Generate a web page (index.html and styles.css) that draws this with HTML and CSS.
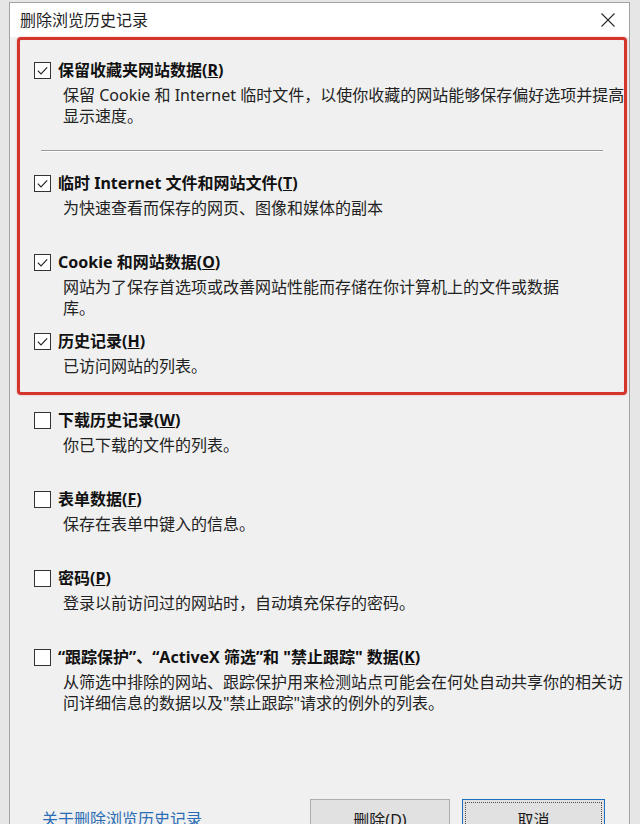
FILE: index.html
```html
<!DOCTYPE html>
<html lang="zh-CN">
<head>
  <meta charset="UTF-8">
  <meta name="viewport" content="width=device-width, initial-scale=1.0">
  <title>删除浏览历史记录</title>
  <link rel="stylesheet" href="styles.css">
</head>
<body>
  <div class="window">
    <div class="titlebar">
      <span class="title">删除浏览历史记录</span>
      <svg class="close" width="14" height="14" viewBox="0 0 14 14">
        <path d="M0.5 0.5 L13.5 13.5 M13.5 0.5 L0.5 13.5" stroke="#2b2b2b" stroke-width="1.1" fill="none"/>
      </svg>
    </div>

    <div class="content">
      <!-- 红框标出的选项 -->
      <div class="highlight">
        <div class="option first">
          <div class="option-head">
            <span class="box"><svg viewBox="0 0 16 16"><path d="M3 8.2 L6.4 11.6 L13 4.6" /></svg></span>
            <span class="label">保留收藏夹网站数据(<u>R</u>)</span>
          </div>
          <div class="option-desc">保留 Cookie 和 Internet 临时文件，以使你收藏的网站能够保存偏好选项并提高<br>显示速度。</div>
        </div>

        <div class="divider"></div>

        <div class="option">
          <div class="option-head">
            <span class="box"><svg viewBox="0 0 16 16"><path d="M3 8.2 L6.4 11.6 L13 4.6" /></svg></span>
            <span class="label">临时 Internet 文件和网站文件(<u>T</u>)</span>
          </div>
          <div class="option-desc">为快速查看而保存的网页、图像和媒体的副本</div>
        </div>

        <div class="option">
          <div class="option-head">
            <span class="box"><svg viewBox="0 0 16 16"><path d="M3 8.2 L6.4 11.6 L13 4.6" /></svg></span>
            <span class="label">Cookie 和网站数据(<u>O</u>)</span>
          </div>
          <div class="option-desc">网站为了保存首选项或改善网站性能而存储在你计算机上的文件或数据<br>库。</div>
        </div>

        <div class="option last">
          <div class="option-head">
            <span class="box"><svg viewBox="0 0 16 16"><path d="M3 8.2 L6.4 11.6 L13 4.6" /></svg></span>
            <span class="label">历史记录(<u>H</u>)</span>
          </div>
          <div class="option-desc">已访问网站的列表。</div>
        </div>
      </div>

      <!-- 其他选项 -->
      <div class="others">
        <div class="option">
          <div class="option-head">
            <span class="box"></span>
            <span class="label">下载历史记录(<u>W</u>)</span>
          </div>
          <div class="option-desc">你已下载的文件的列表。</div>
        </div>

        <div class="option">
          <div class="option-head">
            <span class="box"></span>
            <span class="label">表单数据(<u>F</u>)</span>
          </div>
          <div class="option-desc">保存在表单中键入的信息。</div>
        </div>

        <div class="option">
          <div class="option-head">
            <span class="box"></span>
            <span class="label">密码(<u>P</u>)</span>
          </div>
          <div class="option-desc">登录以前访问过的网站时，自动填充保存的密码。</div>
        </div>

        <div class="option">
          <div class="option-head">
            <span class="box"></span>
            <span class="label">“跟踪保护”、“ActiveX 筛选”和 "禁止跟踪" 数据(<u>K</u>)</span>
          </div>
          <div class="option-desc">从筛选中排除的网站、跟踪保护用来检测站点可能会在何处自动共享你的相关访<br>问详细信息的数据以及"禁止跟踪"请求的例外的列表。</div>
        </div>
      </div>

      <div class="footer">
        <a class="help-link" href="#">关于删除浏览历史记录</a>
        <button class="btn">删除(<u>D</u>)</button>
        <button class="btn default">取消</button>
      </div>
    </div>
  </div>
</body>
</html>
```

FILE: styles.css
```css
body {
  margin: 0;
  height: 824px;
  overflow: hidden;
  background-color: #e6e6e6;
  font-family: "Noto Sans", "Noto Sans CJK SC", sans-serif;
  font-size: 16px;
  color: #1a1a1a;
}
.window {
  width: 619px;
  height: 900px;
  margin: 2px 0 0 9px;
  border: 1px solid #a3a3a3;
  background-color: #f0f0f0;
}
.titlebar {
  height: 34px;
  display: flex;
  align-items: center;
  justify-content: space-between;
  padding: 0 14px 0 10px;
  background-color: #fff;
}
.title {
  line-height: 21px;
  color: #1f1f1f;
}
.close {
  display: block;
}

/* 红框 */
.highlight {
  margin: 0 2px 0 7px;
  padding: 20px 0 15px 0;
  border: 3px solid #d3342c;
  border-radius: 4px;
  box-shadow: 0 0 2px rgba(220, 70, 70, 0.45);
}
.divider {
  margin: 23px 21px 21px 21px;
  border-top: 1px solid #9a9a9a;
  border-bottom: 1px solid #fdfdfd;
}
.others {
  padding-top: 15px;
}

.option {
  height: 79px;
  padding-left: 24px;
}
.highlight .option {
  padding-left: 14px;
}
.highlight .option.first,
.highlight .option.last {
  height: auto;
}
.option-head {
  display: flex;
  align-items: center;
  height: 21px;
}
.box {
  width: 15px;
  height: 15px;
  border: 1px solid #333;
  background-color: #fff;
  margin-right: 7px;
  flex-shrink: 0;
}
.box svg {
  display: block;
  width: 15px;
  height: 15px;
}
.box svg path {
  fill: none;
  stroke: #222;
  stroke-width: 1.2;
}
.label {
  font-weight: bold;
  line-height: 21px;
  color: #111;
  white-space: nowrap;
}
.option-desc {
  margin: 4px 0 0 29px;
  line-height: 21px;
  white-space: nowrap;
  color: #222;
}

/* 底部 */
.footer {
  display: flex;
  align-items: center;
  height: 40px;
  margin-top: 73px;
  padding: 0 24px 0 32px;
}
.help-link {
  margin-right: auto;
  color: #2b6db5;
  text-decoration: none;
  line-height: 21px;
}
.btn {
  height: 40px;
  font-family: inherit;
  font-size: 16px;
  color: #1a1a1a;
  background-color: #e1e1e1;
  border: 1px solid #adadad;
  padding: 0;
}
.btn:first-of-type {
  width: 140px;
  margin-right: 12px;
}
.btn.default {
  width: 143px;
  border: 1px solid #1a6fbe;
  outline: 1px dotted #555;
  outline-offset: -4px;
}
```
